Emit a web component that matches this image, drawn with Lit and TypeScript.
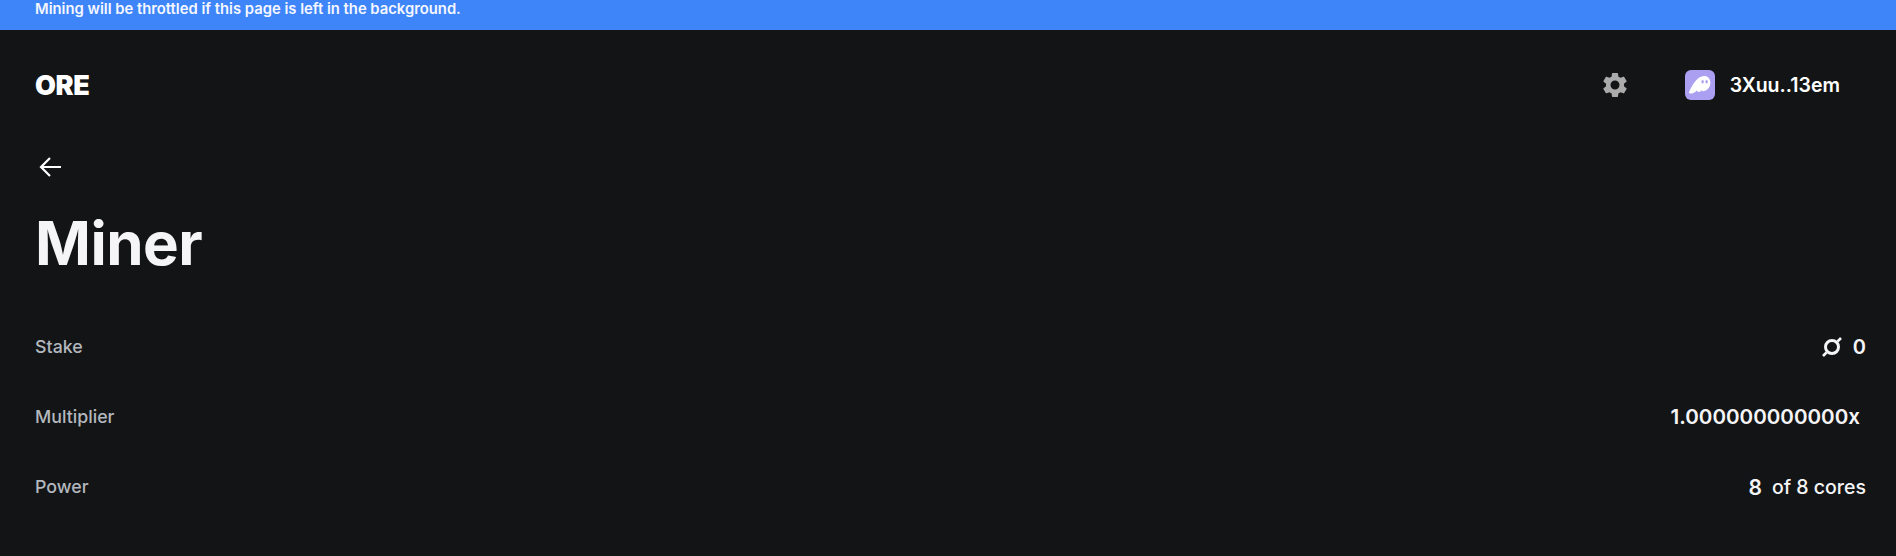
import { LitElement, html, css } from "lit";
import { customElement } from "lit/decorators.js";

@customElement("app-root")
export class AppRoot extends LitElement {
  static styles = css`
    :host { display: block; min-height: 556px; background: #131416; color: #f5f5f7; font-family: Inter, "Liberation Sans", sans-serif; overflow: hidden; }
    .banner { height: 30px; box-sizing: border-box; background: #3e85f9; padding: 1px 35px 0; font-size: 14.8px; font-weight: 600; line-height: 16px; color: #f5f7ff; }
    .header { height: 110px; padding: 0 36px 0 35px; display: flex; align-items: center; justify-content: space-between; }
    .logo { font-size: 27px; font-weight: 900; letter-spacing: -0.4px; line-height: 1; color: #fff; margin-left: 0; }
    .right { display: flex; align-items: center; }
    .gear { width: 30px; height: 30px; display: block; margin-right: 55px; }
    .wallet { display: flex; align-items: center; gap: 15px; font-size: 19.5px; font-weight: 600; margin-right: 20px; color: #fff; }
    .phantom { width: 30px; height: 30px; display: block; }
    main { padding: 0 30px 0 35px; }
    .back { display: block; width: 24px; height: 24px; margin: 15px 0 0 3px; }
    h1 { margin: 28px 0 0; font-size: 60px; line-height: 72px; font-weight: 700; color: #f5f5f7; letter-spacing: -0.5px; }
    .rows { margin-top: 32px; display: flex; flex-direction: column; }
    .row { height: 70px; display: flex; align-items: center; justify-content: space-between; }
    .label { font-size: 17.8px; font-weight: 500; color: #b3b8be; }
    .value { display: flex; align-items: center; font-size: 20px; font-weight: 600; color: #f5f5f7; }
    .stake { margin-top: 2px; }
    .ore { width: 20px; height: 20px; margin-right: 11px; display: block; }
    .mult { margin-right: 6px; font-size: 20.6px; }
    .power { margin-top: 2px; }
    .eight { font-size: 21px; }
    .of { font-weight: 500; font-size: 19.5px; margin-left: 10px; }
  `;

  render() {
    return html`
      <div class="banner">Mining will be throttled if this page is left in the background.</div>
      <div class="header">
        <div class="logo">ORE</div>
        <div class="right">
          <svg class="gear" viewBox="0 0 24 24" fill="#ababab"><path fill-rule="evenodd" d="M19.14 12.94c.04-.3.06-.61.06-.94 0-.32-.02-.64-.07-.94l2.03-1.58a.49.49 0 0 0 .12-.61l-1.92-3.32a.49.49 0 0 0-.59-.22l-2.39.96c-.5-.38-1.03-.7-1.62-.94l-.36-2.54a.48.48 0 0 0-.48-.41h-3.84a.47.47 0 0 0-.47.41l-.36 2.54c-.59.24-1.13.57-1.62.94l-2.39-.96a.48.48 0 0 0-.59.22L2.74 8.87a.47.47 0 0 0 .12.61l2.03 1.58c-.05.3-.09.63-.09.94s.02.64.07.94l-2.03 1.58a.49.49 0 0 0-.12.61l1.92 3.32c.12.22.37.29.59.22l2.39-.96c.5.38 1.03.7 1.62.94l.36 2.54c.05.24.24.41.48.41h3.84c.24 0 .44-.17.47-.41l.36-2.54c.59-.24 1.13-.56 1.62-.94l2.39.96c.22.08.47 0 .59-.22l1.92-3.32a.47.47 0 0 0-.12-.61zM12 15.6A3.6 3.6 0 1 1 12 8.4a3.6 3.6 0 0 1 0 7.2z"/></svg>
          <div class="wallet">
            <svg class="phantom" viewBox="0 0 30 30"><rect width="30" height="30" rx="6" fill="#ab9ff2"/><path fill="#fff" d="M4.200 21.800c-.6 1.300.6 1.800 1.700 1.800 3 0 5.200-2.300 6-3.400 0 1.100.8 1.700 1.700 1.700 1.400 0 2.700-1 3.300-2 .1.900.7 1.300 1.500 1.300 2.900 0 7-3.600 7-8.200C25.400 8.600 22.700 6 19 6 12.500 6 6.800 15.500 4.200 21.800z"/><ellipse cx="17.600" cy="11.800" rx="1.200" ry="1.700" fill="#ab9ff2"/><ellipse cx="21.600" cy="11.800" rx="1.200" ry="1.700" fill="#ab9ff2"/></svg>
            <span>3Xuu..13em</span>
          </div>
        </div>
      </div>
      <main>
        <svg class="back" viewBox="0 0 24 24" fill="none" stroke="#fff" stroke-width="2.2"><path d="M23 12H2.500M12 3 3 12l9 9"/></svg>
        <h1>Miner</h1>
        <div class="rows">
          <div class="row"><span class="label">Stake</span><span class="value stake"><svg class="ore" viewBox="0 0 20 20" fill="none" stroke="#f5f5f7"><circle cx="10" cy="10" r="6.500" stroke-width="3"/><path stroke-width="2.600" d="M1 19l3.500-3.500M15.500 4.500 19 1"/></svg>0</span></div>
          <div class="row"><span class="label">Multiplier</span><span class="value mult">1.000000000000x</span></div>
          <div class="row"><span class="label">Power</span><span class="value power"><span class="eight">8</span><span class="of">of 8 cores</span></span></div>
        </div>
      </main>
    `;
  }
}
